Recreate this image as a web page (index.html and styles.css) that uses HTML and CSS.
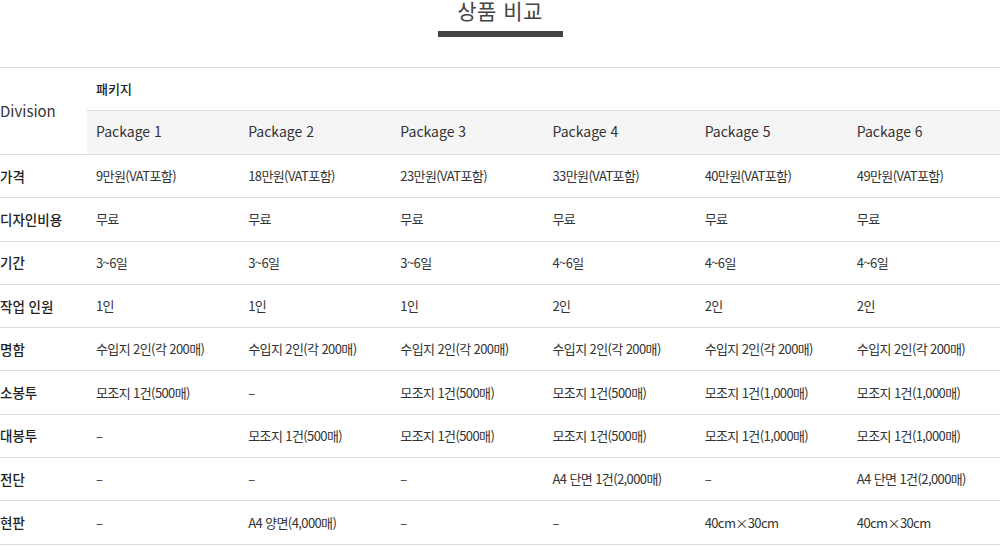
FILE: index.html
```html
<!DOCTYPE html>
<html lang="ko">
<head>
    <meta charset="utf-8" />
    <title>상품 비교</title>
    <link rel="stylesheet" href="styles.css">
</head>
<body>
    <div class="compare">
        <div class="compare-head">
            <h2>상품 비교</h2>
            <span class="bar"></span>
        </div>
        <table class="compare-table">
            <colgroup>
                <col class="col-label">
                <col><col><col><col><col><col>
            </colgroup>
            <thead>
                <tr>
                    <th rowspan="2" class="division">Division</th>
                    <th colspan="6" class="group">패키지</th>
                </tr>
                <tr class="packages">
                    <th>Package 1</th>
                    <th>Package 2</th>
                    <th>Package 3</th>
                    <th>Package 4</th>
                    <th>Package 5</th>
                    <th>Package 6</th>
                </tr>
            </thead>
            <tbody>
                <tr>
                    <th>가격</th>
                    <td>9만원(VAT포함)</td><td>18만원(VAT포함)</td><td>23만원(VAT포함)</td>
                    <td>33만원(VAT포함)</td><td>40만원(VAT포함)</td><td>49만원(VAT포함)</td>
                </tr>
                <tr>
                    <th>디자인비용</th>
                    <td>무료</td><td>무료</td><td>무료</td><td>무료</td><td>무료</td><td>무료</td>
                </tr>
                <tr>
                    <th>기간</th>
                    <td>3~6일</td><td>3~6일</td><td>3~6일</td><td>4~6일</td><td>4~6일</td><td>4~6일</td>
                </tr>
                <tr>
                    <th>작업 인원</th>
                    <td>1인</td><td>1인</td><td>1인</td><td>2인</td><td>2인</td><td>2인</td>
                </tr>
                <tr>
                    <th>명함</th>
                    <td>수입지 2인(각 200매)</td><td>수입지 2인(각 200매)</td><td>수입지 2인(각 200매)</td>
                    <td>수입지 2인(각 200매)</td><td>수입지 2인(각 200매)</td><td>수입지 2인(각 200매)</td>
                </tr>
                <tr>
                    <th>소봉투</th>
                    <td>모조지 1건(500매)</td><td>–</td><td>모조지 1건(500매)</td>
                    <td>모조지 1건(500매)</td><td>모조지 1건(1,000매)</td><td>모조지 1건(1,000매)</td>
                </tr>
                <tr>
                    <th>대봉투</th>
                    <td>–</td><td>모조지 1건(500매)</td><td>모조지 1건(500매)</td>
                    <td>모조지 1건(500매)</td><td>모조지 1건(1,000매)</td><td>모조지 1건(1,000매)</td>
                </tr>
                <tr>
                    <th>전단</th>
                    <td>–</td><td>–</td><td>–</td>
                    <td>A4 단면 1건(2,000매)</td><td>–</td><td>A4 단면 1건(2,000매)</td>
                </tr>
                <tr>
                    <th>현판</th>
                    <td>–</td><td>A4 양면(4,000매)</td><td>–</td>
                    <td>–</td><td>40cm×30cm</td><td>40cm×30cm</td>
                </tr>
            </tbody>
        </table>
    </div>
</body>
</html>
```

FILE: styles.css
```css
*, *:before, *:after{
    box-sizing:border-box;
}
html{
    font-family:"Noto Sans CJK KR", "Noto Sans", sans-serif;
    background:#fff;
    color:#333;
}
body{
    margin:0;
}
.compare-head{
    display:flex;
    flex-direction:column;
    align-items:center;
    height:67px;
}
.compare-head h2{
    margin:-3px 0 0 0;
    font-size:21px;
    line-height:27px;
    font-weight:400;
    color:#444;
    letter-spacing:0.5px;
}
.compare-head .bar{
    display:block;
    width:125px;
    height:6px;
    margin-top:7px;
    background:#444;
}
.compare-table{
    width:1000px;
    border-collapse:collapse;
    table-layout:fixed;
    border-top:1px solid #ddd;
}
.col-label{
    width:87px;
}
.compare-table th,
.compare-table td{
    height:43.3px;
    padding:0 0 1px 9px;
    text-align:left;
    vertical-align:middle;
    border-bottom:1px solid #ddd;
    white-space:nowrap;
}
.compare-table td{
    font-size:13px;
    color:#333;
    letter-spacing:-0.6px;
}
.compare-table tbody th{
    padding-left:0;
    font-size:13.5px;
    font-weight:500;
    color:#222;
}
.compare-table th.division{
    padding-left:0;
    font-size:15px;
    font-weight:400;
    color:#333;
}
.compare-table th.group{
    font-size:13px;
    font-weight:500;
    color:#222;
    height:43px;
}
.packages th{
    height:44px;
    padding-bottom:3px;
    background:#f5f5f5;
    font-size:14px;
    font-weight:400;
    color:#333;
}
```
